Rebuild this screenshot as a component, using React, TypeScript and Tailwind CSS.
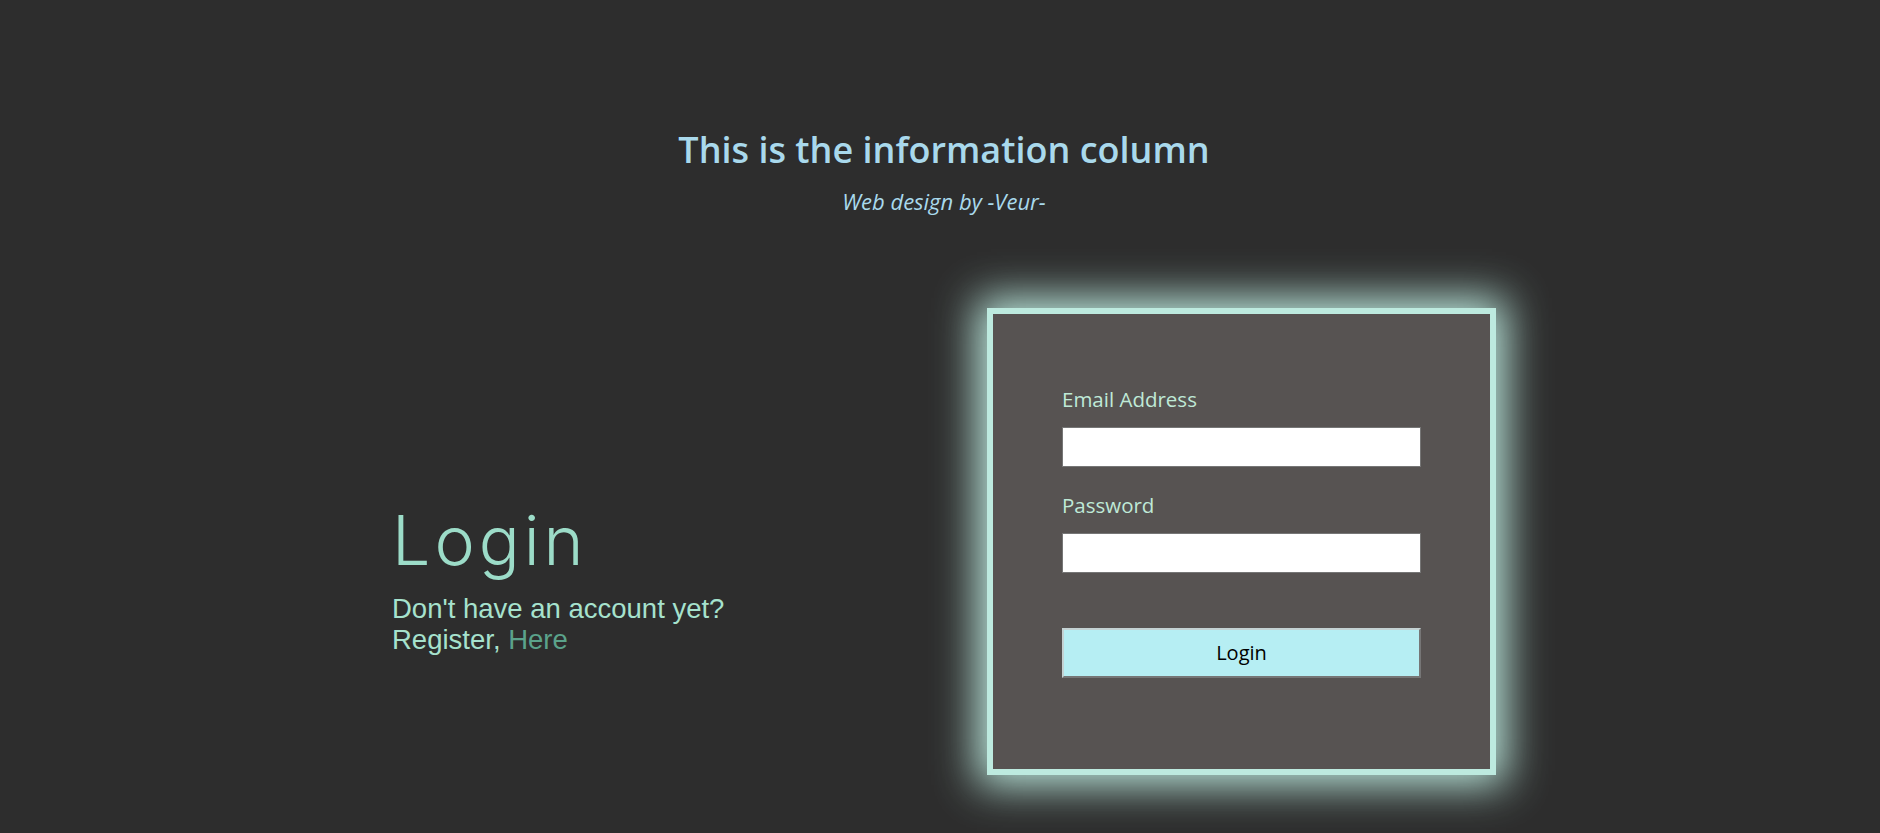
import React from "react";

const App: React.FC = () => {
  return (
    <div className="min-h-[833px] w-full bg-[#2d2d2d] flex flex-col items-center pl-[8px] font-['Open_Sans',sans-serif]">
      {/* information column */}
      <div className="mt-[126px] flex flex-col items-center">
        <h1 className="text-[36px] leading-[48px] font-semibold text-[#a9d9ec]">
          This is the information column
        </h1>
        <p className="mt-[12px] text-[22px] leading-[30px] italic text-[#a9d9ec]">
          Web design by -Veur-
        </p>
      </div>

      <div className="mt-[92px] w-[1104px] flex items-start">
        <div className="mt-[192px] flex flex-col">
          <h2 className="font-['Inter',sans-serif] font-light text-[68px] leading-[80px] tracking-[4px] text-[#9cdcc8]">
            Login
          </h2>
          <p className="mt-[13px] font-['Liberation_Sans',Arial,sans-serif] text-[27.5px] leading-[31px] text-[#a6e2cd]">
            Don't have an account yet?
            <br />
            Register, <a href="#" className="text-[#5ba38b]">Here</a>
          </p>
        </div>

        <div className="ml-auto w-[509px] h-[467px] border-[6px] border-[#bdeadf] bg-[#575352] shadow-[0_0_40px_10px_#bdeadf] px-[69px] pt-[71px]">
          <form className="flex flex-col" onSubmit={(e) => e.preventDefault()}>
            <label className="block text-[20.5px] leading-[28px] text-[#bfe9d7]">Email Address</label>
            <input type="email" className="mt-[14px] h-[40px] w-full bg-white border border-[#767676] outline-none" />
            <label className="mt-[24px] block text-[20.5px] leading-[28px] text-[#bfe9d7]">Password</label>
            <input type="password" className="mt-[14px] h-[40px] w-full bg-white border border-[#767676] outline-none" />
            <button
              type="submit"
              className="mt-[55px] h-[50px] w-full bg-[#b6eef3] border-2 border-t-[#c4d2d3] border-l-[#c4d2d3] border-r-[#767676] border-b-[#767676] text-[20px] text-black"
            >
              Login
            </button>
          </form>
        </div>
      </div>
    </div>
  );
};

export default App;
